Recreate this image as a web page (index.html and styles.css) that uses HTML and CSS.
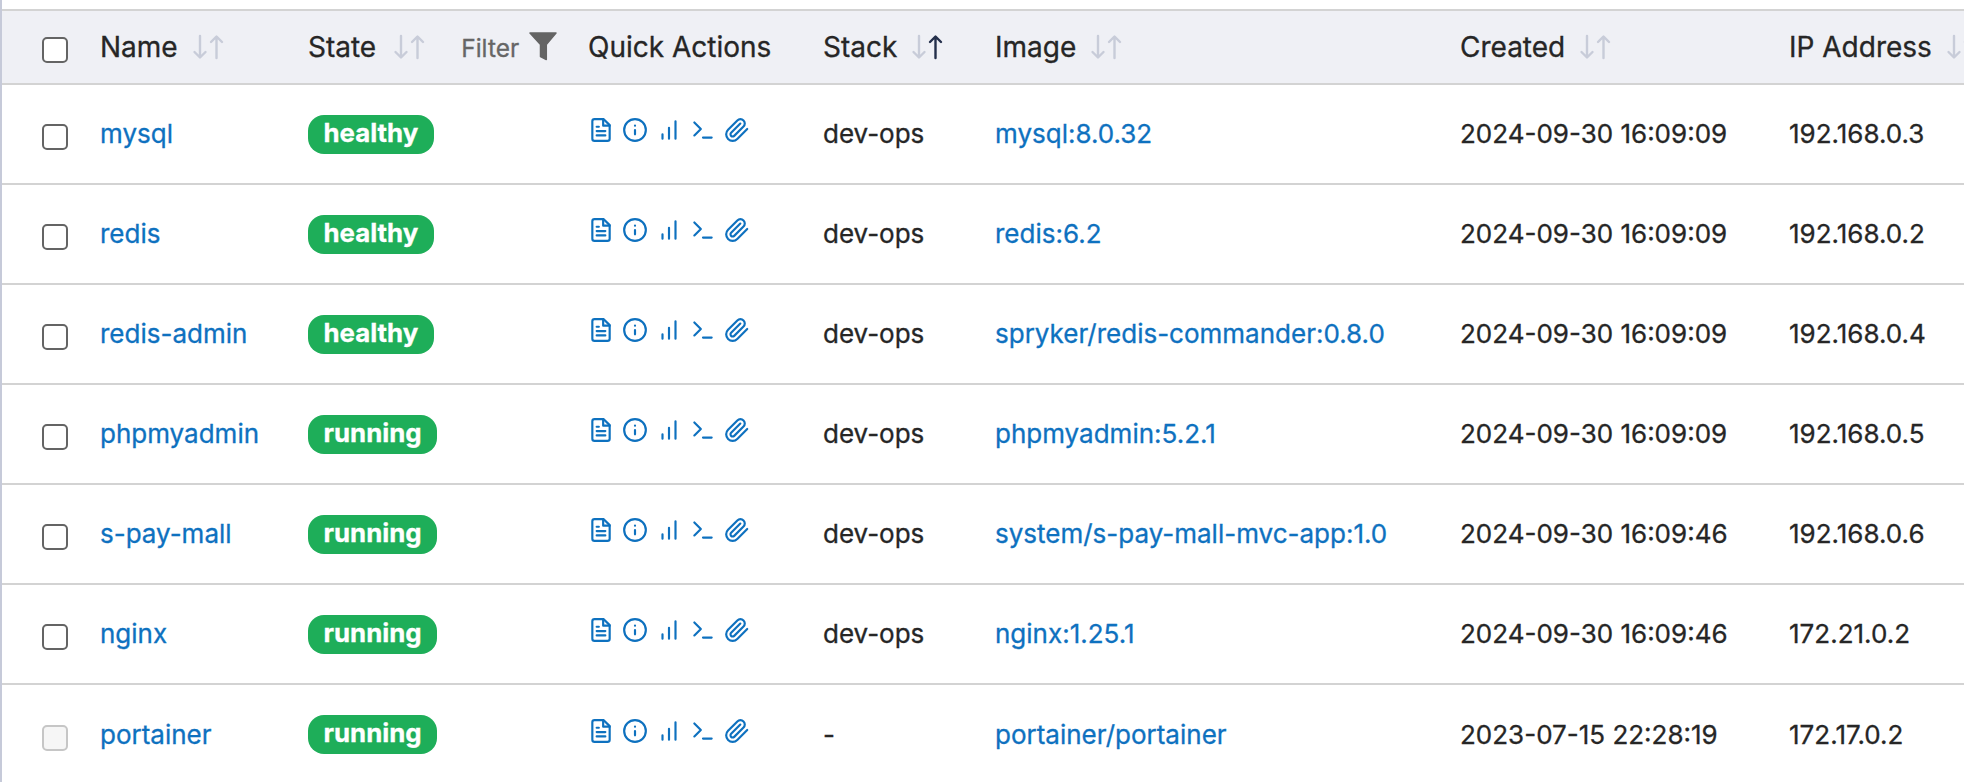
FILE: index.html
```html
<!DOCTYPE html>
<html lang="en">
<head>
<meta charset="utf-8">
<title>Containers</title>
<link rel="stylesheet" href="styles.css">
</head>
<body>
<svg class="sprite" aria-hidden="true">
  <symbol id="i-file" viewBox="0 0 24 24"><path d="M14.500 2H6a2 2 0 0 0-2 2v16a2 2 0 0 0 2 2h12a2 2 0 0 0 2-2V7.500z"/><path d="M14 2v6h6M16 13H8M16 17H8M10 9H8"/></symbol>
  <symbol id="i-info" viewBox="0 0 24 24"><circle cx="12" cy="12" r="10"/><path d="M12 16v-4M12 8h.01"/></symbol>
  <symbol id="i-stats" viewBox="0 0 24 24"><path d="M12 20V10M18 20V4M6 20v-4"/></symbol>
  <symbol id="i-term" viewBox="0 0 24 24"><path d="M4 17l6-6-6-6M12 19h8"/></symbol>
  <symbol id="i-clip" viewBox="0 0 24 24"><path d="m21.440 11.050-9.190 9.190a6 6 0 0 1-8.490-8.490l8.570-8.570A4 4 0 1 1 18 8.840l-8.590 8.570a2 2 0 0 1-2.830-2.830l8.490-8.480"/></symbol>
  <symbol id="i-actions" viewBox="0 0 162 26">
    <use href="#i-file" x="0" width="26" height="26"/><use href="#i-info" x="34" width="26" height="26"/><use href="#i-stats" x="68" width="26" height="26"/><use href="#i-term" x="102" width="26" height="26"/><use href="#i-clip" x="136" width="26" height="26"/>
  </symbol>
</svg>
<div class="table" id="table">
  <div class="row head">
    <span class="box"></span>
    <div class="cell">Name<svg class="sort" viewBox="0 0 32 26"><path d="M8 2v21M2.500 18 8 23.500 13.500 18"/><path d="M24.500 24V3M19 8l5.500-5.500L30 8"/></svg></div>
    <div class="cell state">State<svg class="sort" viewBox="0 0 32 26"><path d="M8 2v21M2.500 18 8 23.500 13.500 18"/><path d="M24.500 24V3M19 8l5.500-5.500L30 8"/></svg><span class="filter">Filter<svg class="funnel" viewBox="0 0 28 29"><path d="M1 1h26L17.300 12.500v15L11.500 24.500v-12z"/></svg></span></div>
    <div class="cell">Quick Actions</div>
    <div class="cell">Stack<svg class="sort" viewBox="0 0 32 26"><path d="M8 2v21M2.500 18 8 23.500 13.500 18"/><path class="on" d="M24.500 24V3M19 8l5.500-5.500L30 8"/></svg></div>
    <div class="cell">Image<svg class="sort" viewBox="0 0 32 26"><path d="M8 2v21M2.500 18 8 23.500 13.500 18"/><path d="M24.500 24V3M19 8l5.500-5.500L30 8"/></svg></div>
    <div class="cell">Created<svg class="sort" viewBox="0 0 32 26"><path d="M8 2v21M2.500 18 8 23.500 13.500 18"/><path d="M24.500 24V3M19 8l5.500-5.500L30 8"/></svg></div>
    <div class="cell">IP Address<svg class="sort" viewBox="0 0 32 26"><path d="M8 2v21M2.500 18 8 23.500 13.500 18"/><path d="M24.500 24V3M19 8l5.500-5.500L30 8"/></svg></div>
  </div>
  <div class="row"><span class="box"></span><a class="link">mysql</a><div><span class="badge">healthy</span></div><svg class="actions"><use href="#i-actions"/></svg><span>dev-ops</span><a class="link">mysql:8.0.32</a><span>2024-09-30 16:09:09</span><span>192.168.0.3</span></div>
  <div class="row"><span class="box"></span><a class="link">redis</a><div><span class="badge">healthy</span></div><svg class="actions"><use href="#i-actions"/></svg><span>dev-ops</span><a class="link">redis:6.2</a><span>2024-09-30 16:09:09</span><span>192.168.0.2</span></div>
  <div class="row"><span class="box"></span><a class="link">redis-admin</a><div><span class="badge">healthy</span></div><svg class="actions"><use href="#i-actions"/></svg><span>dev-ops</span><a class="link">spryker/redis-commander:0.8.0</a><span>2024-09-30 16:09:09</span><span>192.168.0.4</span></div>
  <div class="row"><span class="box"></span><a class="link">phpmyadmin</a><div><span class="badge">running</span></div><svg class="actions"><use href="#i-actions"/></svg><span>dev-ops</span><a class="link">phpmyadmin:5.2.1</a><span>2024-09-30 16:09:09</span><span>192.168.0.5</span></div>
  <div class="row"><span class="box"></span><a class="link">s-pay-mall</a><div><span class="badge">running</span></div><svg class="actions"><use href="#i-actions"/></svg><span>dev-ops</span><a class="link">system/s-pay-mall-mvc-app:1.0</a><span>2024-09-30 16:09:46</span><span>192.168.0.6</span></div>
  <div class="row"><span class="box"></span><a class="link">nginx</a><div><span class="badge">running</span></div><svg class="actions"><use href="#i-actions"/></svg><span>dev-ops</span><a class="link">nginx:1.25.1</a><span>2024-09-30 16:09:46</span><span>172.21.0.2</span></div>
  <div class="row last"><span class="box disabled"></span><a class="link">portainer</a><div><span class="badge">running</span></div><svg class="actions"><use href="#i-actions"/></svg><span>-</span><a class="link">portainer/portainer</a><span>2023-07-15 22:28:19</span><span>172.17.0.2</span></div>
</div>
</body>
</html>
```
FILE: styles.css
```css
* { box-sizing: border-box; }
body { margin: 0; height: 782px; overflow: hidden; background: #fff; color: #262626; font-family: Inter, sans-serif; font-size: 26px; line-height: 36px; -webkit-text-stroke: 0.3px; }
.sprite { display: none; }
.table { height: 782px; padding-top: 9px; border-left: 2px solid #c6cad9; overflow: hidden; }
.row { display: grid; grid-template-columns: 58px 208px 280px 235px 172px 465px 329px 220px; align-items: start; height: 100px; padding: 31px 0 0 40px; border-bottom: 2px solid #d3d3d3; white-space: nowrap; }
.head { height: 76px; padding-top: 18px; background: #eff0f5; border-top: 2px solid #d3d3d3; font-size: 28px; }
.cell { display: flex; align-items: center; }
.last { padding-top: 32px; border-bottom: 0; }
.box { width: 26px; height: 26px; margin-top: 8px; border: 2px solid #646464; border-radius: 5px; background: #fff; }
.disabled { border-color: #c6c6c6; background: #f6f6f6; }
.link { color: #0e71bf; }
.badge { display: inline-block; height: 39px; margin-top: -1px; padding: 0 15.5px; border-radius: 16px; background: #1eae59; color: #fff; font-size: 25.8px; font-weight: 700; line-height: 35px; vertical-align: top; }
.last .badge { margin-top: -2px; }
.actions { width: 162px; height: 26px; margin-top: 1px; fill: none; stroke: #0e71bf; stroke-width: 2; stroke-linecap: round; stroke-linejoin: round; }
.sort { flex: none; width: 32px; height: 26px; margin-left: 14px; fill: none; stroke: #c8ccd9; stroke-width: 2.400; stroke-linecap: round; stroke-linejoin: round; }
.state .sort { margin-left: 17px; }
.sort .on { stroke: #242f4b; }
.filter { display: flex; align-items: center; height: 36px; padding-top: 2px; margin-left: 36px; color: #666; font-size: 24.5px; }
.funnel { width: 28px; height: 29px; margin: -4px 0 0 10px; fill: #646464; stroke: #646464; stroke-width: 1.500; stroke-linejoin: round; }
```
